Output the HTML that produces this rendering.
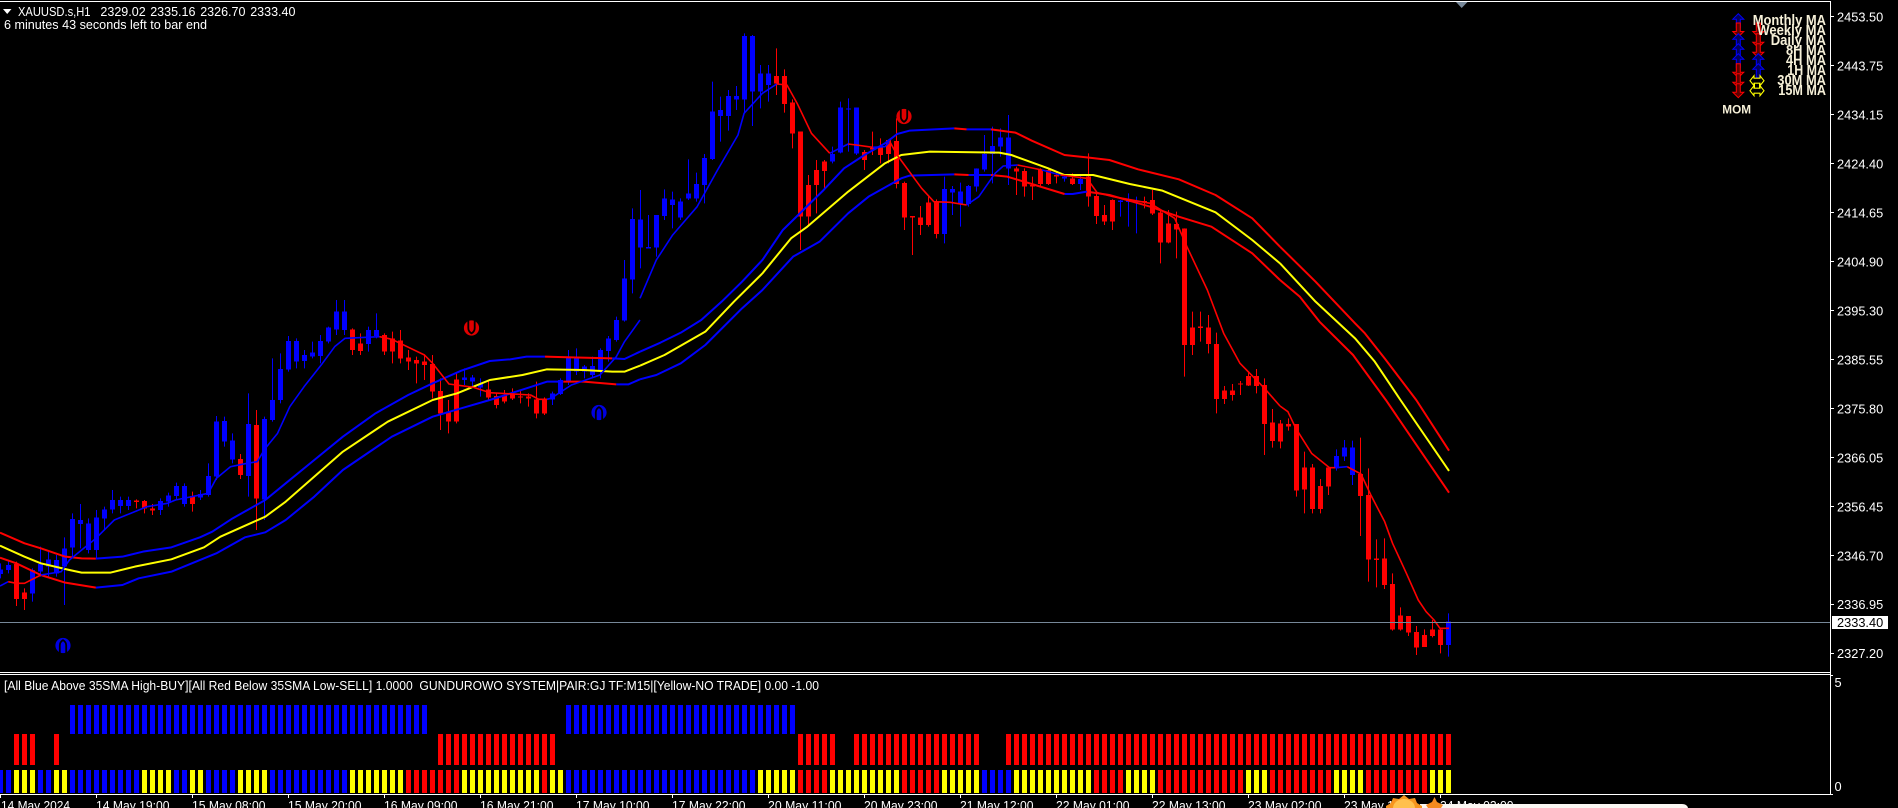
<!DOCTYPE html>
<html lang="en">
<head>
<meta charset="utf-8">
<title>XAUUSD.s,H1</title>
<style>
html,body{margin:0;padding:0;background:#000;width:1898px;height:808px;overflow:hidden}
svg{display:block}
text{font-family:"Liberation Sans",sans-serif;font-size:12.8px;fill:#fff;white-space:pre}
.lg{font-size:14.5px;font-weight:bold;fill:#f6f0d8}
.c{fill:none;shape-rendering:crispEdges}
.w{stroke-width:1}
.b{stroke-width:5}
.bl{stroke:#00f}
.rd{stroke:#f00}
.l{fill:none;vector-effect:non-scaling-stroke;stroke-width:2;stroke-linejoin:round}
.f{stroke-width:1.6}
.ye{stroke:#ff0}
</style>
</head>
<body>
<svg width="1898" height="808" viewBox="0 0 1898 808" xmlns="http://www.w3.org/2000/svg">
<defs>
<path id="au" d="M0-7 5.5-1.5H2V7H-2V-1.5H-5.5Z" stroke-width="1"/>
<path id="ad" d="M0 7 5.5 1.5H2V-7H-2V1.5H-5.5Z" stroke-width="1"/>
<path id="ah" d="M-7 0-3-5V-2.5H3V-5L7 0 3 5V2.5H-3V5Z" stroke-width="1.1" fill="#000" stroke="#ff0"/>
</defs>
<rect width="1898" height="808" fill="#000"/>

<!-- candles, upper part -->
<g transform="translate(0,300) scale(1,.33333)" class="c">
<path class="c w bl" d="M0.5 790V835M8.5 780V820M32.5 805V905M40.5 740V830M48.5 755V830M56.5 765V830M64.5 712V915M72.5 640V775M80.5 612V745M88.5 655V760M96.5 630V775M104.5 620V690M112.5 570V640M120.5 590V640M128.5 590V630M160.5 595V645M168.5 578V620M176.5 548V600M184.5 550V620M200.5 570V600M208.5 490V590M216.5 348V540M224.5 350V440M232.5 400V490M248.5 280V590M264.5 350V660M272.5 175V365M280.5 160V310M288.5 108V215M296.5 115V205M304.5 150V205M312.5 125V175M320.5 105V190M328.5 80V130M336.5 0V105M344.5 0V105M368.5 80V155M376.5 40V115M464.5 205V255M472.5 225V260M480.5 235V290M552.5 275V315M560.5 235V285M568.5 150V255M576.5 145V225M584.5 195V235M592.5 170V235M600.5 145V235M608.5 108V185M616.5 50V125M624.5 -120V65M632.5 -275V-20"/>
<path class="c b bl" d="M0.5 808V822M8.5 795V810M32.5 810V880M40.5 792V815M48.5 778V800M56.5 780V820M64.5 745V800M72.5 657V743M80.5 660V672M88.5 670V750M96.5 652V750M104.5 628V655M112.5 600V628M120.5 600V618M128.5 600V618M160.5 603V630M168.5 586V605M176.5 558V588M184.5 558V612M200.5 582V592M208.5 528V585M216.5 365V530M224.5 363V425M232.5 422V478M248.5 372V528M264.5 357V598M272.5 300V360M280.5 207V300M288.5 123V208M296.5 123V185M304.5 165V183M312.5 158V170M320.5 123V168M328.5 83V125M336.5 35V88M344.5 35V90M368.5 90V132M376.5 90V108M464.5 232V240M472.5 232V245M480.5 250V262M552.5 280V298M560.5 240V282M568.5 172V245M576.5 172V215M584.5 200V215M592.5 198V225M600.5 150V215M608.5 115V153M616.5 60V120M624.5 -65V62M632.5 -243V-62"/>
<path class="c w rd" d="M16.5 785V918M24.5 865V930M136.5 598V625M144.5 600V640M152.5 612V645M192.5 575V635M240.5 462V537M256.5 330V690M352.5 85V165M360.5 100V165M384.5 100V165M392.5 95V190M400.5 90V190M408.5 150V210M416.5 170V250M424.5 165V240M432.5 165V295M440.5 235V390M448.5 300V400M456.5 220V370M488.5 240V300M496.5 280V325M504.5 270V310M512.5 265V300M520.5 270V310M528.5 280V320M536.5 245V355M544.5 292V345"/>
<path class="c b rd" d="M16.5 792V897M24.5 878V897M136.5 602V606M144.5 603V625M152.5 625V632M192.5 588V612M240.5 477V525M256.5 375V595M352.5 88V150M360.5 130V153M384.5 105V155M392.5 115V155M400.5 122V175M408.5 172V185M416.5 180V190M424.5 185V195M432.5 192V275M440.5 273V340M448.5 335V365M456.5 238V365M488.5 268V292M496.5 288V315M504.5 285V305M512.5 280V295M520.5 290V293M528.5 290V295M536.5 298V340M544.5 298V340"/>
</g>
<g transform="scale(1,.33333)" class="c">
<path class="c w bl" d="M640.5 570V805M648.5 645V745M656.5 645V770M664.5 568V660M672.5 575V685M680.5 595V660M688.5 478V600M696.5 518V605M704.5 462V610M712.5 245V480M720.5 290V425M728.5 270V392M736.5 258V330M744.5 100V340M752.5 105V378M760.5 195V325M768.5 195V305M832.5 440V490M840.5 305V460M848.5 295V455M856.5 323V465M944.5 530V730M952.5 558V645M960.5 548V680M968.5 555V620M976.5 505V575M984.5 405V515M992.5 380V550M1000.5 385V470M1008.5 345V555M1064.5 522V545M1080.5 528V570M1120.5 600V650M1128.5 580V680M1136.5 590V700"/>
<path class="c b bl" d="M640.5 658V743M648.5 741V745M656.5 645V743M664.5 595V648M672.5 598V615M680.5 605V652M688.5 580V595M696.5 552V595M704.5 474V555M712.5 335V477M720.5 330V348M728.5 288V348M736.5 288V298M744.5 108V298M752.5 108V275M760.5 220V275M768.5 220V255M832.5 462V485M840.5 323V458M848.5 325V329M856.5 323V460M944.5 567V702M952.5 567V578M960.5 575V612M968.5 558V612M976.5 505V560M984.5 462V508M992.5 438V462M1000.5 412V440M1008.5 412V505M1064.5 530V535M1080.5 537V552M1120.5 601V606M1128.5 601V606M1136.5 601V606"/>
<path class="c w rd" d="M776.5 145V285M784.5 208V338M792.5 298V445M800.5 395V750M808.5 525V680M816.5 480V640M824.5 480V568M864.5 450V510M872.5 395V465M880.5 415V490M888.5 420V490M896.5 355V565M904.5 545V690M912.5 650V765M920.5 618V705M928.5 590V680M936.5 598V715M1016.5 500V585M1024.5 505V590M1032.5 530V600M1040.5 505V560M1048.5 505V555M1056.5 515V550M1072.5 520V555M1088.5 460V620M1096.5 580V672M1104.5 615V675M1112.5 598V690M1144.5 590V625M1152.5 570V645M1160.5 630V790M1168.5 630V730M1176.5 635V775M1184.5 685V1130M1192.5 935V1065M1200.5 935V1025M1208.5 945V1060M1216.5 998V1240M1224.5 1158V1212M1232.5 1152V1202M1240.5 1143V1185M1248.5 1115V1158M1256.5 1107V1180M1264.5 1135V1365M1272.5 1227V1343"/>
<path class="c b rd" d="M776.5 228V250M784.5 228V312M792.5 308V400M800.5 395V650M808.5 555V650M816.5 510V555M824.5 484V513M864.5 456V480M872.5 444V449M880.5 443V465M888.5 420V462M896.5 423V552M904.5 549V652M912.5 648V653M920.5 652V675M928.5 608V675M936.5 607V702M1016.5 505V515M1024.5 513V560M1032.5 555V559M1040.5 508V552M1048.5 510V552M1056.5 525V530M1072.5 535V552M1088.5 530V590M1096.5 588V648M1104.5 645V665M1112.5 600V665M1144.5 603V607M1152.5 600V640M1160.5 637V728M1168.5 670V728M1176.5 672V688M1184.5 685V1035M1192.5 982V1035M1200.5 980V984M1208.5 982V1032M1216.5 1032V1197M1224.5 1172V1197M1232.5 1172V1185M1240.5 1150V1154M1248.5 1128V1156M1256.5 1128V1158M1264.5 1155V1272M1272.5 1268V1323"/>
</g>
<g transform="translate(0,400) scale(1,.33333)" class="c">
<path class="c w bl" d="M1336.5 148V212M1344.5 120V183M1352.5 122V255M1448.5 640V770"/>
<path class="c b bl" d="M1336.5 168V205M1344.5 142V170M1352.5 142V225M1448.5 665V735"/>
<path class="c w rd" d="M1280.5 60V145M1288.5 55V92M1296.5 72V290M1304.5 155V340M1312.5 192V340M1320.5 237V340M1328.5 202V285M1360.5 113V408M1368.5 205V545M1376.5 418V562M1384.5 415V567M1392.5 520V692M1400.5 622V692M1408.5 648V708M1416.5 678V765M1424.5 688V741M1432.5 660V712M1440.5 685V760"/>
<path class="c b rd" d="M1280.5 70V125M1288.5 72V80M1296.5 72V272M1304.5 202V268M1312.5 202V327M1320.5 258V327M1328.5 202V260M1360.5 222V288M1368.5 285V478M1376.5 475V480M1384.5 475V555M1392.5 552V688M1400.5 646V688M1408.5 648V698M1416.5 696V743M1424.5 705V741M1432.5 688V708M1440.5 688V735"/>
</g>

<!-- moving averages left -->
<g transform="translate(0,300) scale(.40816,.33333)">
<path class="l rd" d="M0 698L60 730 100 745 160 770 200 775 235 776M1335 170L1400 172 1500 175M0 773L40 790 100 825 160 848 235 863M1380 245L1430 245 1510 253"/>
<path class="l bl" d="M235 776L300 770 350 755 420 742 490 712 520 695 570 655 650 600 700 550 770 480 840 410 920 340 1000 285 1060 250 1130 212 1200 183 1250 178 1290 170 1335 170M1500 175L1530 177 1568 155M235 863L300 855 340 835 420 815 530 760 600 712 650 697 700 660 770 590 840 510 960 410 1060 350 1130 325 1200 300 1290 265 1340 245 1380 245M1510 253L1540 253 1568 238"/>
<path class="l ye" d="M0 737L60 770 100 790 170 810 200 818 270 818 330 800 420 778 500 742 540 710 650 650 700 605 770 530 840 455 950 365 1060 300 1120 280 1200 240 1280 225 1340 208 1430 210 1500 215 1530 215 1568 197"/>
<path class="l f bl" d="M0 858L20 845M100 825L150 815 170 780 200 750 235 715 280 660 320 640 360 620 410 610 430 600 510 580 530 535 565 500 605 490 630 485 650 445 680 400 710 320 745 260 790 190 820 140 845 115 930 110M1340 298L1350 295 1400 255 1470 225 1510 170 1530 125 1568 60"/>
<path class="l f rd" d="M20 845L40 850 60 850 100 825M930 110L960 118 1040 165 1060 190 1100 252 1160 262 1200 278 1300 285 1320 298 1340 298"/>
</g>
<!-- moving averages middle -->
<g transform="translate(640,0) scale(.40816,.33333)">
<path class="l bl" d="M0 1055L50 1028 100 998 150 960 200 905 250 845 300 780 350 690 400 630 450 570 500 505 550 465 600 430 630 402 660 392 770 385M800 388L860 388M0 1138L40 1125 100 1090 160 1035 250 925 300 870 375 770 440 725 510 640 560 590 640 535 660 527 770 523M805 525L860 525M1040 582L1060 582 1095 575"/>
<path class="l rd" d="M770 385L800 388M860 388L920 398 960 422 1040 465 1100 473 1150 480 1220 508 1320 538 1410 585 1500 655 1568 740M770 523L805 525M860 525L900 530 960 552 1040 582M1095 575L1150 585 1250 620 1320 650 1400 680 1500 760 1568 840"/>
<path class="l ye" d="M0 1097L60 1065 160 995 230 905 300 820 370 715 410 680 510 575 600 490 640 465 710 455 880 458 910 465 1000 505 1040 525 1110 525 1200 552 1280 572 1410 637 1500 720 1568 790"/>
<path class="l f bl" d="M0 895L40 780 80 705 140 620 190 510 240 405 255 340 300 280 335 252M465 460L510 432M570 442L600 440 612 425M800 615L830 590 870 520 890 498 925 495M985 510L1030 525"/>
<path class="l f rd" d="M335 252L360 255 385 310 420 400 465 460M510 432L530 435 570 442M612 425L630 465 690 565 720 605 760 607 800 615M925 495L985 510M1030 525L1095 535 1120 578 1160 590 1250 610 1310 655 1340 740 1390 870 1430 1000 1470 1090 1530 1165 1568 1218"/>
</g>
<!-- moving averages right -->
<g transform="translate(1280,0) scale(.39494,.33333)">
<path class="l rd" d="M0 740L90 845 190 970 215 1000 265 1075 345 1200 428 1352M0 840L50 890 100 965 185 1065 268 1200 428 1478"/>
<path class="l ye" d="M0 790L90 905 190 1015 240 1085 305 1200 428 1413"/>
</g>
<g transform="translate(1280,400) scale(.39494,.33333)">
<path class="l f rd" d="M0 18L20 35 40 85 80 160 125 203 140 203M170 200L205 222 230 285 265 365 285 430 320 520 350 600 370 635 390 660 405 685 428 685"/>
<path class="l f bl" d="M140 203L170 200"/>
</g>

<!-- signal icons -->
<g transform="translate(471.5,328)">
<circle r="7.6" fill="#e00000"/><path d="M-3.2-8V0Q-3.2 3.6 0 5.4 3.2 3.6 3.2 0V-8" fill="none" stroke="#000" stroke-width="1.8"/>
</g>
<g transform="translate(904,116.5)">
<circle r="7.6" fill="#e00000"/><path d="M-3.2-8V0Q-3.2 3.6 0 5.4 3.2 3.6 3.2 0V-8" fill="none" stroke="#000" stroke-width="1.8"/>
</g>
<g transform="translate(599,412.5)">
<circle r="7.6" fill="#0000e0"/><path d="M-3.2 8V0Q-3.2-3.6 0-5.4 3.2-3.6 3.2 0V8" fill="none" stroke="#000" stroke-width="1.8"/>
</g>
<g transform="translate(63,645.5)">
<circle r="7.6" fill="#0000e0"/><path d="M-3.2 8V0Q-3.2-3.6 0-5.4 3.2-3.6 3.2 0V8" fill="none" stroke="#000" stroke-width="1.8"/>
</g>

<!-- price line -->
<rect x="0" y="622" width="1830" height="1" fill="#778899"/>
<polygon points="1456,2 1467.5,2 1461.7,8" fill="#778899"/>

<!-- indicator bars -->
<g fill="none" stroke-dasharray="5 3" shape-rendering="crispEdges">
<path stroke="#00f" stroke-width="23" d="M-2 781.5H11M38 781.5H51M70 781.5H139M174 781.5H187M206 781.5H235M270 781.5H347M566 781.5H755M982 781.5H1011"/>
<path stroke="#ff0" stroke-width="23" d="M14 781.5H35M54 781.5H67M142 781.5H171M190 781.5H203M238 781.5H267M350 781.5H403M462 781.5H539M550 781.5H563M758 781.5H795M830 781.5H899M942 781.5H979M1014 781.5H1091M1126 781.5H1155M1246 781.5H1267M1334 781.5H1363M1430 781.5H1451"/>
<path stroke="#f00" stroke-width="23" d="M406 781.5H459M542 781.5H547M798 781.5H827M902 781.5H939M1094 781.5H1123M1158 781.5H1243M1270 781.5H1331M1366 781.5H1427"/>
<path stroke="#f00" stroke-width="31" d="M14 749.5H35M54 749.5H59M438 749.5H555M798 749.5H835M854 749.5H979M1006 749.5H1451"/>
<path stroke="#00f" stroke-width="29" d="M70 719.5H427M566 719.5H795"/>
</g>

<!-- frames -->
<g fill="#fff" shape-rendering="crispEdges">
<rect x="0" y="1" width="1831" height="1"/>
<rect x="1830" y="1" width="1" height="794"/>
<rect x="0" y="672" width="1831" height="1"/>
<rect x="0" y="674" width="1831" height="1"/>
<rect x="0" y="794" width="1831" height="1"/>
</g>
<path stroke="#fff" stroke-width="1" fill="none" shape-rendering="crispEdges" d="M1831 16.5H1834M1831 65.5H1834M1831 114.5H1834M1831 163.5H1834M1831 212.5H1834M1831 261.5H1834M1831 310.5H1834M1831 359.5H1834M1831 408.5H1834M1831 457.5H1834M1831 506.5H1834M1831 555.5H1834M1831 604.5H1834M1831 653.5H1834M1831 675.5H1833M1831 794.5H1833M0.5 795V798M96.5 795V798M192.5 795V798M288.5 795V798M384.5 795V798M480.5 795V798M576.5 795V798M672.5 795V798M768.5 795V798M864.5 795V798M960.5 795V798M1056.5 795V798M1152.5 795V798M1248.5 795V798M1344.5 795V798M1440.5 795V798"/>

<!-- header text -->
<polygon points="3,9 11.5,9 7.2,14" fill="#fff"/>
<text x="18" y="16" textLength="72.5" lengthAdjust="spacingAndGlyphs">XAUUSD.s,H1</text>
<text x="100.4" y="16" textLength="45.3" lengthAdjust="spacingAndGlyphs">2329.02</text>
<text x="150.2" y="16" textLength="45.3" lengthAdjust="spacingAndGlyphs">2335.16</text>
<text x="200.2" y="16" textLength="45.3" lengthAdjust="spacingAndGlyphs">2326.70</text>
<text x="250.2" y="16" textLength="45.3" lengthAdjust="spacingAndGlyphs">2333.40</text>
<text x="4" y="29" textLength="203" lengthAdjust="spacingAndGlyphs">6 minutes 43 seconds left to bar end</text>

<!-- price axis -->
<g>
<text x="1837" y="21.5" textLength="46.2" lengthAdjust="spacingAndGlyphs">2453.50</text>
<text x="1837" y="70.5" textLength="46.2" lengthAdjust="spacingAndGlyphs">2443.75</text>
<text x="1837" y="119.5" textLength="46.2" lengthAdjust="spacingAndGlyphs">2434.15</text>
<text x="1837" y="168.5" textLength="46.2" lengthAdjust="spacingAndGlyphs">2424.40</text>
<text x="1837" y="217.5" textLength="46.2" lengthAdjust="spacingAndGlyphs">2414.65</text>
<text x="1837" y="266.5" textLength="46.2" lengthAdjust="spacingAndGlyphs">2404.90</text>
<text x="1837" y="315.5" textLength="46.2" lengthAdjust="spacingAndGlyphs">2395.30</text>
<text x="1837" y="364.5" textLength="46.2" lengthAdjust="spacingAndGlyphs">2385.55</text>
<text x="1837" y="413.5" textLength="46.2" lengthAdjust="spacingAndGlyphs">2375.80</text>
<text x="1837" y="462.5" textLength="46.2" lengthAdjust="spacingAndGlyphs">2366.05</text>
<text x="1837" y="511.5" textLength="46.2" lengthAdjust="spacingAndGlyphs">2356.45</text>
<text x="1837" y="560.5" textLength="46.2" lengthAdjust="spacingAndGlyphs">2346.70</text>
<text x="1837" y="609" textLength="46.2" lengthAdjust="spacingAndGlyphs">2336.95</text>
<text x="1837" y="658" textLength="46.2" lengthAdjust="spacingAndGlyphs">2327.20</text>
<rect x="1832" y="616" width="56" height="13" fill="#fff"/>
<text x="1837" y="627" textLength="46.2" lengthAdjust="spacingAndGlyphs" style="fill:#000">2333.40</text>
<text x="1834.5" y="687">5</text>
<text x="1834.5" y="791">0</text>
</g>

<!-- indicator header -->
<text x="4" y="690" textLength="815" lengthAdjust="spacingAndGlyphs">[All Blue Above 35SMA High-BUY][All Red Below 35SMA Low-SELL] 1.0000  GUNDUROWO SYSTEM|PAIR:GJ TF:M15|[Yellow-NO TRADE] 0.00 -1.00</text>

<!-- time axis -->
<g>
<text x="1" y="810" textLength="69" lengthAdjust="spacingAndGlyphs">14 May 2024</text>
<text x="96" y="810" textLength="73.5" lengthAdjust="spacingAndGlyphs">14 May 19:00</text>
<text x="192" y="810" textLength="73.5" lengthAdjust="spacingAndGlyphs">15 May 08:00</text>
<text x="288" y="810" textLength="73.5" lengthAdjust="spacingAndGlyphs">15 May 20:00</text>
<text x="384" y="810" textLength="73.5" lengthAdjust="spacingAndGlyphs">16 May 09:00</text>
<text x="480" y="810" textLength="73.5" lengthAdjust="spacingAndGlyphs">16 May 21:00</text>
<text x="576" y="810" textLength="73.5" lengthAdjust="spacingAndGlyphs">17 May 10:00</text>
<text x="672" y="810" textLength="73.5" lengthAdjust="spacingAndGlyphs">17 May 22:00</text>
<text x="768" y="810" textLength="73.5" lengthAdjust="spacingAndGlyphs">20 May 11:00</text>
<text x="864" y="810" textLength="73.5" lengthAdjust="spacingAndGlyphs">20 May 23:00</text>
<text x="960" y="810" textLength="73.5" lengthAdjust="spacingAndGlyphs">21 May 12:00</text>
<text x="1056" y="810" textLength="73.5" lengthAdjust="spacingAndGlyphs">22 May 01:00</text>
<text x="1152" y="810" textLength="73.5" lengthAdjust="spacingAndGlyphs">22 May 13:00</text>
<text x="1248" y="810" textLength="73.5" lengthAdjust="spacingAndGlyphs">23 May 02:00</text>
<text x="1344" y="810" textLength="73.5" lengthAdjust="spacingAndGlyphs">23 May 14:00</text>
<text x="1440" y="810" textLength="73.5" lengthAdjust="spacingAndGlyphs">24 May 02:00</text>
</g>

<!-- overlay at bottom edge -->
<path d="M1420 808V804H1682Q1687 804 1688 808Z" fill="#fbf7f3"/>
<polygon points="1404,795 1409,799 1415,798 1417,803 1422,806 1422,808 1386,808 1386,806 1391,803 1393,798 1399,799" fill="#f7941d"/>
<path d="M1393 808A11 9 0 0 1 1415 808Z" fill="#ffc04d"/>
<polygon points="1434.5,797 1437,802 1443,805 1441,808 1428,808 1426,805 1432,802" fill="#f58a1f"/>

<!-- legend arrows -->
<g fill="#000060" stroke="#00f">
<use href="#au" x="1738.3" y="20.7"/>
</g>
<g fill="#600000" stroke="#f00">
<use href="#ad" x="1738.3" y="30"/>
</g>
<g fill="#000060" stroke="#00f">
<use href="#au" x="1738.3" y="40.7"/>
<use href="#au" x="1738.3" y="50.7"/>
<use href="#au" x="1738.3" y="60.7"/>
</g>
<g fill="#600000" stroke="#f00">
<use href="#ad" x="1738.3" y="70.7"/>
<use href="#ad" x="1738.3" y="80.7"/>
<use href="#ad" x="1738.3" y="90.7"/>
<use href="#ad" x="1758.3" y="30"/>
<use href="#ad" x="1758.3" y="40.7"/>
<use href="#ad" x="1758.3" y="50.7"/>
</g>
<g fill="#000060" stroke="#00f">
<use href="#au" x="1758.3" y="60.7"/>
<use href="#au" x="1758.3" y="70.7"/>
</g>
<use href="#ah" x="1757" y="80.7"/>
<use href="#ah" x="1757" y="90.7"/>
<path d="M1754.5 83V88M1759.5 83V88" stroke="#ff0" fill="none"/>

<!-- legend text -->
<text class="lg" x="1752.7" y="25" textLength="73.3" lengthAdjust="spacingAndGlyphs">Monthly MA</text>
<text class="lg" x="1757.3" y="35" textLength="68.7" lengthAdjust="spacingAndGlyphs">Weekly MA</text>
<text class="lg" x="1770.7" y="45" textLength="55.3" lengthAdjust="spacingAndGlyphs">Daily MA</text>
<text class="lg" x="1786" y="55" textLength="40" lengthAdjust="spacingAndGlyphs">8H MA</text>
<text class="lg" x="1786" y="65" textLength="40" lengthAdjust="spacingAndGlyphs">4H MA</text>
<text class="lg" x="1787.3" y="75" textLength="38.7" lengthAdjust="spacingAndGlyphs">1H MA</text>
<text class="lg" x="1777.3" y="85" textLength="48.7" lengthAdjust="spacingAndGlyphs">30M MA</text>
<text class="lg" x="1778.3" y="95" textLength="47.7" lengthAdjust="spacingAndGlyphs">15M MA</text>
<text x="1722.3" y="113.5" textLength="28.7" lengthAdjust="spacingAndGlyphs" style="font-weight:bold;font-size:12px;fill:#f6f0d8">MOM</text>
</svg>
</body>
</html>
